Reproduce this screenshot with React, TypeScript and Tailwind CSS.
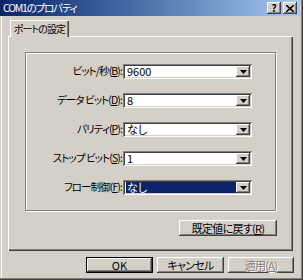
import React from "react";

const raised =
  "shadow-[inset_-1px_-1px_#404040,inset_1px_1px_#ffffff,inset_-2px_-2px_#808080,inset_2px_2px_#d4d0c8]";
const sunken =
  "shadow-[inset_1px_1px_#808080,inset_-1px_-1px_#ffffff,inset_2px_2px_#404040,inset_-2px_-2px_#d4d0c8]";

function Arrow() {
  return (
    <svg width="7" height="4" viewBox="0 0 7 4">
      <path d="M0 0h7L3.5 4z" fill="#000" />
    </svg>
  );
}

function Combo(props: { value: string; selected?: boolean }) {
  return (
    <div className={`w-[129px] h-[15px] bg-white ${sunken} flex p-[2px]`}>
      <div className="flex-1 flex items-center pl-[1px]">
        <span
          className={`h-full flex-1 flex items-center leading-none px-[1px] ${
            props.selected ? "bg-[#0a246a] text-white" : "text-black"
          }`}
        >
          {props.value}
        </span>
      </div>
      <div className={`w-[14px] h-full bg-[#d4d0c8] ${raised} flex items-center justify-center`}>
        <Arrow />
      </div>
    </div>
  );
}

function Label(props: { text: string; k: string }) {
  return (
    <div className="text-right text-black leading-none whitespace-nowrap text-[10.5px] tracking-[-0.9px]">
      {props.text}(<span className="underline">{props.k}</span>):
    </div>
  );
}

const rows = [
  { text: "ビット/秒", k: "B", value: "9600" },
  { text: "データ ビット", k: "D", value: "8" },
  { text: "パリティ", k: "P", value: "なし" },
  { text: "ストップ ビット", k: "S", value: "1" },
  { text: "フロー制御", k: "F", value: "なし", selected: true },
];

export default function App() {
  return (
    <div
      className="w-[303px] h-[280px] bg-[#d4d0c8] flex flex-col text-[11px] [font-feature-settings:'palt'] shadow-[inset_-1px_-1px_#404040,inset_-2px_-2px_#808080,inset_1px_0_#d4d0c8,inset_2px_0_#ffffff]"
      style={{ fontFamily: '"Noto Sans CJK JP", "Liberation Sans", sans-serif' }}
    >
      {/* title bar */}
      <div className="h-[16px] mr-[3px] flex items-center justify-between bg-gradient-to-r from-[#0a246a] to-[#a6caf0] pl-[3px] pr-[3px]">
        <span className="text-white leading-none text-[10.5px] tracking-[-1.2px]">COM1のプロパティ</span>
        <div className="flex gap-[2px]">
          <div className={`w-[14px] h-[12px] bg-[#d4d0c8] ${raised} flex items-center justify-center text-[10px] font-bold leading-none text-black`}>
            ?
          </div>
          <div className={`w-[14px] h-[12px] bg-[#d4d0c8] ${raised} flex items-center justify-center`}>
            <svg width="8" height="7" viewBox="0 0 8 7">
              <path d="M0 0l8 7M8 0L0 7" stroke="#000" strokeWidth="1.6" />
            </svg>
          </div>
        </div>
      </div>

      {/* tabs */}
      <div className="mt-[4px] ml-[8px] flex flex-col w-[285px]">
        <div className="flex pl-[2px]">
          <div className="relative z-10 -mb-[1px] w-[59px] h-[17px] bg-[#d4d0c8] shadow-[inset_1px_1px_#ffffff,inset_-1px_0_#404040,inset_-2px_0_#808080] flex items-center justify-center text-black leading-none whitespace-nowrap text-[10px] tracking-[-0.9px]">
            ポートの設定
          </div>
        </div>
        <div className="h-[215px] shadow-[inset_1px_1px_#ffffff,inset_-1px_-1px_#404040,inset_-2px_-2px_#808080] pt-[16px] pl-[17px] flex flex-col">
          <div className="w-[251px] h-[159px] border border-[#808080] shadow-[inset_1px_1px_#ffffff,1px_1px_#ffffff] pt-[11px] flex flex-col gap-[14px]">
            {rows.map((r) => (
              <div key={r.k} className="flex items-center">
                <div className="w-[96px]">
                  <Label text={r.text} k={r.k} />
                </div>
                <div className="ml-[1px]">
                  <Combo value={r.value} selected={r.selected} />
                </div>
              </div>
            ))}
          </div>
          <div className="w-[252px] flex justify-end mt-[9px]">
            <div className={`w-[98px] h-[16px] ${raised} flex items-center justify-center text-black leading-none tracking-[-0.7px]`}>
              既定値に戻す(<span className="underline">R</span>)
            </div>
          </div>
        </div>
      </div>

      {/* bottom buttons */}
      <div className="mt-[6px] ml-[86px] flex gap-[4px]">
        <div className="w-[67px] h-[16px] border border-black flex">
          <div className={`flex-1 ${raised} flex items-center justify-center text-black leading-none`}>OK</div>
        </div>
        <div className={`w-[67px] h-[16px] ${raised} flex items-center justify-center text-black leading-none tracking-[-0.7px]`}>
          キャンセル
        </div>
        <div className={`w-[66px] h-[16px] ${raised} flex items-center justify-center text-[#808080] leading-none tracking-[-0.7px] [text-shadow:1px_1px_#ffffff]`}>
          適用(<span className="underline">A</span>)
        </div>
      </div>
    </div>
  );
}
